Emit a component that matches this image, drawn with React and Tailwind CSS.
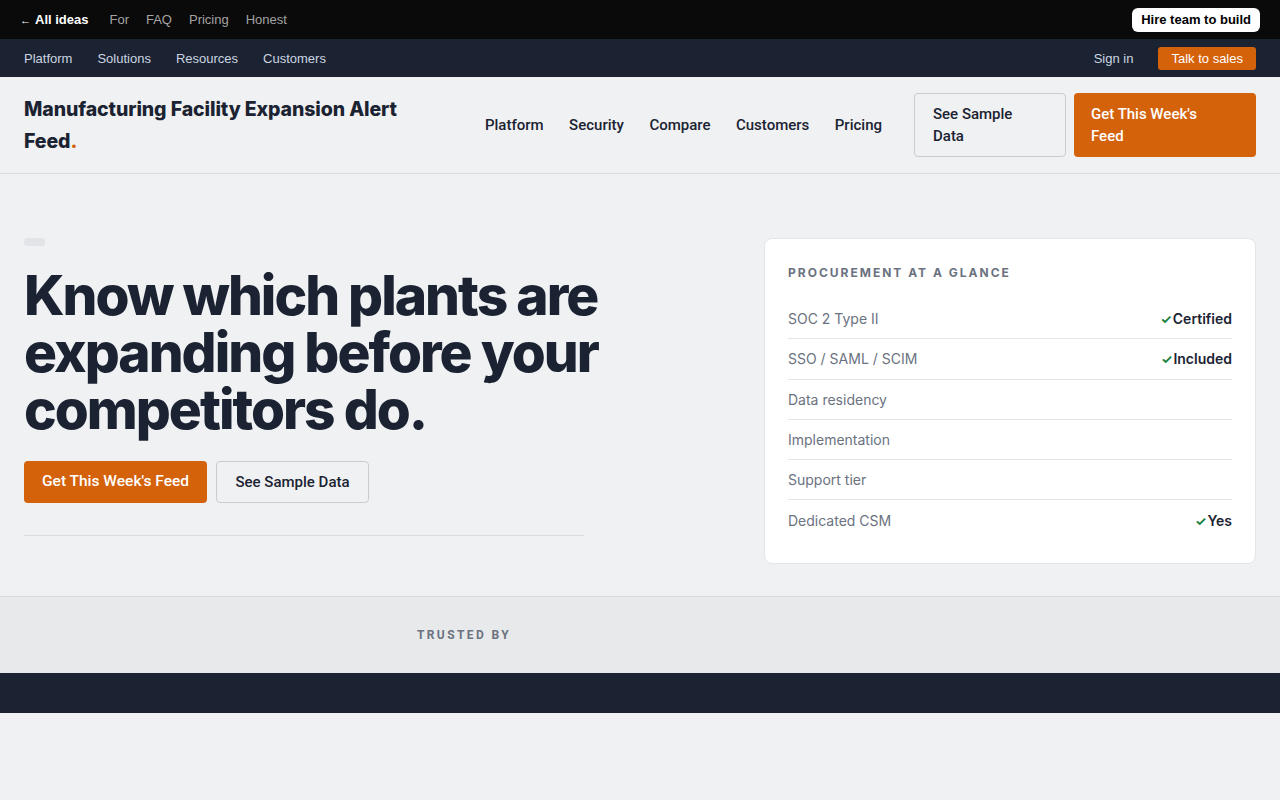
import React from "react";

const inter = { fontFamily: "Inter, 'Noto Sans', sans-serif" };

function Check() {
  return <span className="text-[#15803d] font-bold text-[13px] mr-[1px]">✓</span>;
}

export default function App() {
  const rows = [
    ["SOC 2 Type II", "Certified"],
    ["SSO / SAML / SCIM", "Included"],
    ["Data residency", null],
    ["Implementation", null],
    ["Support tier", null],
    ["Dedicated CSM", "Yes"],
  ];
  return (
    <div className="min-h-[800px] bg-[#f0f1f3]" style={inter}>
      {/* top bar */}
      <div className="h-[39px] bg-[#0a0a0a] flex items-center justify-between px-[20px] font-['Liberation_Sans',Arial,sans-serif] text-[13px]">
        <div className="flex items-center">
          <span className="text-white font-bold"><span className="text-[11px] mr-[4px]">←</span>All ideas</span>
          <div className="flex items-center gap-[17px] ml-[21px] text-[#a3a3a3]">
            <span>For</span>
            <span>FAQ</span>
            <span>Pricing</span>
            <span>Honest</span>
          </div>
        </div>
        <button className="bg-white text-black font-bold rounded-[6px] h-[24px] px-[9px] text-[13px]">Hire team to build</button>
      </div>
      {/* second bar */}
      <div className="h-[38px] pt-[1px] bg-[#1b2332] flex items-center justify-between px-[24px] font-['Liberation_Sans',Arial,sans-serif] text-[13px] text-[#cbd5e1]">
        <div className="flex items-center gap-[25px]">
          <span>Platform</span>
          <span>Solutions</span>
          <span>Resources</span>
          <span>Customers</span>
        </div>
        <div className="flex items-center gap-[25px]">
          <span>Sign in</span>
          <button className="bg-[#d4620b] text-white rounded-[3px] h-[23px] px-[13px] text-[13px]">Talk to sales</button>
        </div>
      </div>
      {/* header */}
      <header className="h-[97px] border-b border-[#d9dbdf] flex items-center justify-between px-[24px]">
        <div className="w-[410px] text-[19.5px] font-extrabold leading-[32px] text-[#1b2332] tracking-[-0.1px]">
          Manufacturing Facility Expansion Alert Feed<span className="text-[#d4620b]">.</span>
        </div>
        <div className="flex items-center font-['Roboto',sans-serif]">
          <nav className="flex items-center gap-[25.5px] text-[15px] font-medium text-[#1b2332] mr-[32px]">
            <span>Platform</span>
            <span>Security</span>
            <span>Compare</span>
            <span>Customers</span>
            <span>Pricing</span>
          </nav>
          <button className="w-[152px] h-[64px] border border-[#c9ccd1] rounded-[4px] text-left px-[18px] text-[15px] font-medium leading-[22px] text-[#1b2332] bg-[#f0f1f3]">
            See Sample Data
          </button>
          <button className="ml-[8px] w-[182px] h-[64px] rounded-[4px] bg-[#d4620b] text-left pl-[17px] pr-[40px] text-[15px] font-medium leading-[22px] text-white">
            Get This Week's Feed
          </button>
        </div>
      </header>
      {/* hero */}
      <section className="flex justify-between px-[24px] pt-[64px] pb-[32px]">
        <div className="w-[560px]">
          <div className="w-[21px] h-[8px] rounded-[3px] bg-[#e3e4e7]" />
          <h1 className="mt-[21px] text-[55px] font-extrabold leading-[57px] tracking-[-2px] text-[#1b2332] w-[620px]">
            Know which plants are expanding before your competitors do.
          </h1>
          <div className="flex gap-[9px] mt-[23px] font-['Roboto',sans-serif]">
            <button className="w-[183px] h-[42px] rounded-[4px] bg-[#d4620b] text-white text-[15.5px] font-medium">Get This Week's Feed</button>
            <button className="w-[153px] h-[42px] rounded-[4px] border border-[#c9ccd1] text-[#1b2332] text-[15px] font-medium">See Sample Data</button>
          </div>
          <div className="mt-[32px] h-px bg-[#d9dbdf] w-[560px]" />
        </div>
        <div className="w-[492px] h-[326px] bg-white border border-[#e3e5e8] rounded-[8px] px-[23px] pt-[25px]">
          <div className="text-[12px] font-bold tracking-[2px] text-[#6b7280]">PROCUREMENT AT A GLANCE</div>
          <div className="mt-[17px]">
            {rows.map(([k, v], i) => (
              <div key={k} className={`flex items-center justify-between h-[40.3px] text-[14px] ${i < rows.length - 1 ? "border-b border-[#e3e5e8]" : ""}`}>
                <span className="text-[#6b7280]">{k}</span>
                {v && (
                  <span className="font-semibold text-[#1b2332]"><Check />{v}</span>
                )}
              </div>
            ))}
          </div>
        </div>
      </section>
      {/* trusted */}
      <section className="h-[77px] bg-[#e8e9eb] border-t border-[#d9dbdf] flex items-center px-[24px]">
        <div className="w-[880px] text-center text-[12px] font-bold tracking-[2.4px] text-[#6b7280] font-['Roboto',sans-serif]">TRUSTED BY</div>
      </section>
      <div className="h-[40px] bg-[#1b2332]" />
    </div>
  );
}
